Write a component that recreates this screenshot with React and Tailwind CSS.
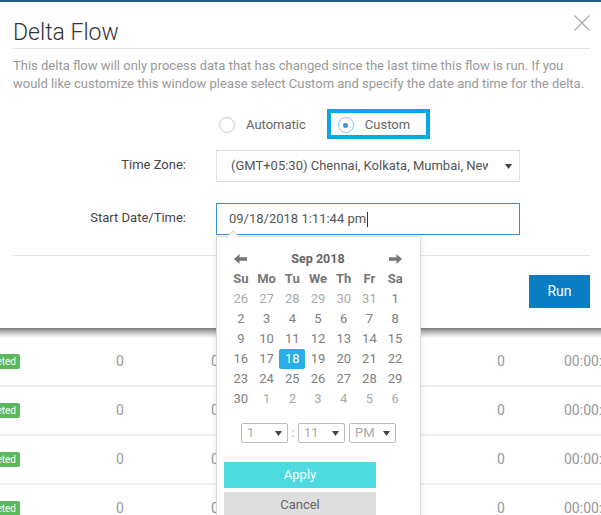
import React from "react";

const prev = [26, 27, 28, 29, 30, 31];
const next = [1, 2, 3, 4, 5, 6];

function Caret({ className = "" }) {
  return (
    <svg width="7" height="5" viewBox="0 0 7 5" className={className}>
      <path d="M0 0 L7 0 L3.5 5 Z" fill="#444" />
    </svg>
  );
}

function Arrow({ dir }) {
  return (
    <svg width="13" height="10" viewBox="0 0 13 10">
      {dir === "left" ? (
        <path d="M0 5 L5.5 0 L5.5 3.3 L13 3.3 L13 6.7 L5.5 6.7 L5.5 10 Z" fill="#777" />
      ) : (
        <path d="M13 5 L7.5 0 L7.5 3.3 L0 3.3 L0 6.7 L7.5 6.7 L7.5 10 Z" fill="#777" />
      )}
    </svg>
  );
}

function MiniSelect({ value }) {
  return (
    <div className="flex h-[20px] w-[47px] items-center justify-between rounded-[2px] border border-[#bbb] bg-white pl-[5px] pr-[5px] text-[13px] text-[#aaa]">
      <span>{value}</span>
      <Caret />
    </div>
  );
}

function Row() {
  return (
    <div className="flex h-[49px] items-center overflow-hidden border-b-2 border-[#eee] text-[14px] text-[#999]">
      <div className="flex w-[20px] shrink-0 justify-end overflow-hidden">
        <span className="whitespace-nowrap rounded-[2px] bg-[#5cb85c] px-[4px] text-[10px] leading-[15px] text-white">
          Completed
        </span>
      </div>
      <div className="w-[96px] shrink-0" />
      <div className="w-[95px] shrink-0">0</div>
      <div className="w-[286px] shrink-0">0</div>
      <div className="w-[67px] shrink-0">0</div>
      <div className="shrink-0 whitespace-nowrap">00:00:12</div>
    </div>
  );
}

export default function App() {
  const days = [];
  prev.forEach((d) => days.push({ d, muted: true }));
  for (let i = 1; i <= 30; i++) days.push({ d: i, muted: false });
  next.forEach((d) => days.push({ d, muted: true }));

  return (
    <div className="relative h-[515px] w-[601px] overflow-hidden bg-white font-['Roboto',sans-serif]">
      {/* Modal */}
      <div className="relative border-t-2 border-[#245a7e] bg-white">
        <div className="mx-[13px] mr-[11px] border-b border-[#e5e5e5] pt-[16px]">
          <div className="text-[23px] font-light leading-[30px] text-[#333]">Delta Flow</div>
        </div>
        <svg
          className="absolute right-[11px] top-[13px]"
          width="16"
          height="16"
          viewBox="0 0 16 16"
        >
          <path d="M0.5 0.5 L15.5 15.5 M15.5 0.5 L0.5 15.5" stroke="#aaa" strokeWidth="1.2" />
        </svg>

        <p className="mx-[13px] mt-[8px] whitespace-nowrap text-[13px] leading-[18px] text-[#999]">
          This delta flow will only process data that has changed since the last time this flow is run. If you
          <br />
          would like customize this window please select Custom and specify the date and time for the delta.
        </p>

        {/* radios */}
        <div className="mt-[22px] flex h-[20px] items-center pl-[219px] text-[13px] text-[#666]">
          <span className="h-[16px] w-[16px] rounded-full border border-[#ccc] bg-white" />
          <span className="ml-[11px]">Automatic</span>
          <div className="relative ml-[32px] flex items-center">
            <div className="absolute left-[-11px] top-[-6px] h-[30px] w-[103px] border-4 border-[#03a9e9]" />
            <span className="flex h-[16px] w-[16px] items-center justify-center rounded-full border border-[#8ccbf0] bg-white">
              <span className="h-[5px] w-[5px] rounded-full bg-[#3a97d8]" />
            </span>
            <span className="ml-[11px]">Custom</span>
          </div>
        </div>

        {/* time zone */}
        <div className="mt-[15px] flex items-center">
          <div className="w-[186px] pb-[3px] text-right text-[13px] text-[#444]">Time Zone:</div>
          <div className="ml-[30px] flex h-[32px] w-[304px] items-center border border-[#e0e0e0] pl-[14px] pr-[7px] text-[13px] text-[#555]">
            <span className="w-[257px] overflow-hidden whitespace-nowrap">
              (GMT+05:30) Chennai, Kolkata, Mumbai, New Delhi
            </span>
            <Caret className="ml-auto" />
          </div>
        </div>

        {/* start date */}
        <div className="mt-[21px] flex items-center">
          <div className="w-[186px] pb-[3px] text-right text-[13px] text-[#444]">Start Date/Time:</div>
          <div className="ml-[30px] flex h-[32px] w-[304px] items-center border border-[#3b8fd6] pl-[12px] text-[13px] text-[#555]">
            <span>09/18/2018 1:11:44 pm</span>
            <span className="ml-[1px] h-[15px] w-[1px] bg-[#333]" />
          </div>
        </div>

        <div className="ml-[13px] mr-[11px] mt-[20px] border-t border-[#e5e5e5]" />

        <div className="flex justify-end pb-[20px] pr-[11px] pt-[19px]">
          <div className="flex h-[33px] w-[61px] items-center justify-center bg-[#0a7cc4] text-[14px] text-white">
            Run
          </div>
        </div>
      </div>

      {/* shadow */}
      <div className="h-[10px] bg-gradient-to-b from-[#7a7a7a] via-[#c9c9c9] to-white" />

      {/* table rows */}
      <div>
        <Row />
        <Row />
        <Row />
        <Row />
      </div>

      {/* Calendar popup */}
      <div className="absolute left-[216px] top-[236px] w-[205px] border border-[#ddd] bg-white px-[11px] pt-[12px] pb-[20px] shadow-[0_2px_6px_rgba(0,0,0,0.1)]">
        <svg className="absolute left-[9px] top-[-7px]" width="14" height="8" viewBox="0 0 14 8">
          <path d="M0 8 L7 1 L14 8 Z" fill="white" />
          <path d="M0 7.5 L7 0.8 L14 7.5" fill="none" stroke="#ccc" strokeWidth="1" />
        </svg>
        <div className="grid w-[180px] grid-cols-7 text-center text-[13px]">
          <div className="flex h-[20px] items-center justify-center">
            <Arrow dir="left" />
          </div>
          <div className="col-span-5 flex h-[20px] items-center justify-center text-[12.5px] font-bold text-[#666]">
            Sep 2018
          </div>
          <div className="flex h-[20px] items-center justify-center">
            <Arrow dir="right" />
          </div>
          {["Su", "Mo", "Tu", "We", "Th", "Fr", "Sa"].map((n) => (
            <div key={n} className="flex h-[20px] items-center justify-center font-bold text-[#777]">
              {n}
            </div>
          ))}
          {days.map((x, i) =>
            !x.muted && x.d === 18 ? (
              <div
                key={i}
                className="flex h-[20px] items-center justify-center rounded-[2px] bg-[#2aaee8] text-white"
              >
                {x.d}
              </div>
            ) : (
              <div
                key={i}
                className={`flex h-[20px] items-center justify-center ${
                  x.muted ? "text-[#aaa]" : "text-[#808080]"
                }`}
              >
                {x.d}
              </div>
            )
          )}
        </div>

        <div className="ml-[13px] mt-[14px] flex items-center">
          <MiniSelect value="1" />
          <span className="w-[10px] text-center text-[12px] text-[#999]">:</span>
          <MiniSelect value="11" />
          <span className="w-[4px]" />
          <MiniSelect value="PM" />
        </div>

        <div className="-ml-[4px] mt-[19px] flex h-[26px] w-[152px] items-center justify-center bg-[#4ddbe0] text-[13px] text-white">
          Apply
        </div>
        <div className="-ml-[4px] mt-[4px] flex h-[26px] w-[152px] items-center justify-center bg-[#dedede] text-[13px] text-[#666]">
          Cancel
        </div>
      </div>
    </div>
  );
}
